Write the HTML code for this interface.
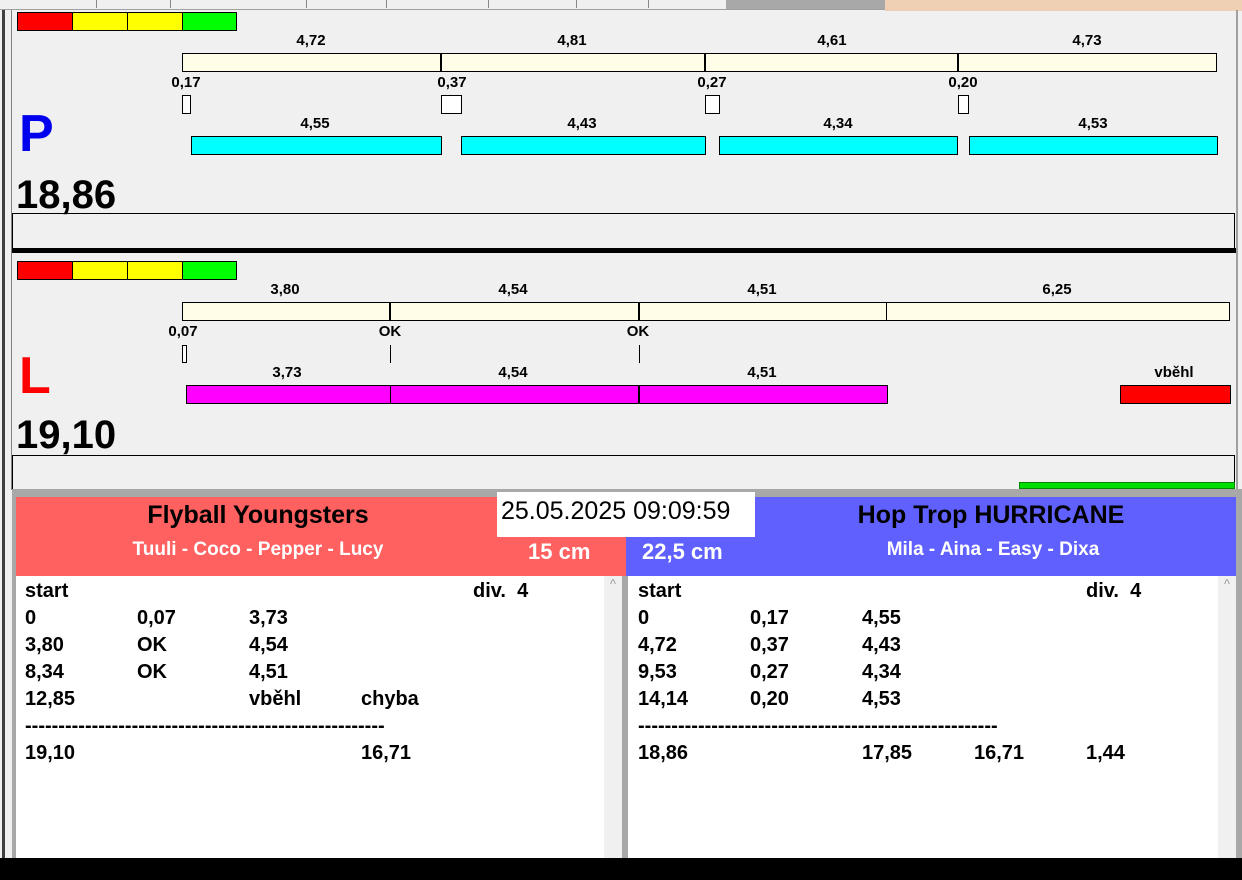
<!DOCTYPE html>
<html><head><meta charset="utf-8"><style>
*{margin:0;padding:0;box-sizing:border-box}
body{width:1242px;height:880px;position:relative;background:#f0f0f0;overflow:hidden;font-family:"Liberation Sans",Arial,sans-serif;font-weight:bold;color:#000}
div{position:absolute}
.c{transform:translateX(-50%);white-space:nowrap;font-size:15px;line-height:17px}
.bx{border:1px solid #000}
.t{font-size:20px;line-height:24px;white-space:nowrap}
.d{font-size:20px;line-height:24px;white-space:nowrap;width:360px;overflow:hidden}
</style></head><body>
<!-- tab strip -->
<div style="left:0;top:0;width:885px;height:10px;background:#f0f0f0;border-bottom:1px solid #a0a0a0"></div>
<div style="left:96px;top:0;width:1px;height:8px;background:#888"></div>
<div style="left:170px;top:0;width:1px;height:8px;background:#888"></div>
<div style="left:306px;top:0;width:1px;height:8px;background:#888"></div>
<div style="left:386px;top:0;width:1px;height:8px;background:#888"></div>
<div style="left:488px;top:0;width:1px;height:8px;background:#888"></div>
<div style="left:576px;top:0;width:1px;height:8px;background:#888"></div>
<div style="left:648px;top:0;width:1px;height:8px;background:#888"></div>
<div style="left:726px;top:0;width:159px;height:9px;background:#a8a8a8"></div>
<div style="left:885px;top:0;width:357px;height:11px;background:#f0d0b4"></div>
<!-- left frame -->
<div style="left:2px;top:10px;width:3px;height:850px;background:#404040"></div>
<div style="left:11px;top:10px;width:1px;height:480px;background:#808080"></div>
<div style="left:1236px;top:10px;width:2px;height:480px;background:#a0a0a0"></div>

<!-- panel P -->
<div class="bx" style="left:17px;top:12px;width:56px;height:19px;background:#f00"></div>
<div class="bx" style="left:72px;top:12px;width:56px;height:19px;background:#ff0"></div>
<div class="bx" style="left:127px;top:12px;width:56px;height:19px;background:#ff0"></div>
<div class="bx" style="left:182px;top:12px;width:55px;height:19px;background:#0f0"></div>

<div class="c" style="left:311px;top:32px">4,72</div>
<div class="c" style="left:572px;top:32px">4,81</div>
<div class="c" style="left:832px;top:32px">4,61</div>
<div class="c" style="left:1087px;top:32px">4,73</div>
<div class="bx" style="left:182px;top:53px;width:1035px;height:19px;background:#fffde8"></div>
<div style="left:440px;top:53px;width:2px;height:19px;background:#000"></div>
<div style="left:704px;top:53px;width:2px;height:19px;background:#000"></div>
<div style="left:957px;top:53px;width:2px;height:19px;background:#000"></div>
<div class="c" style="left:186px;top:74px">0,17</div>
<div class="c" style="left:452px;top:74px">0,37</div>
<div class="c" style="left:712px;top:74px">0,27</div>
<div class="c" style="left:963px;top:74px">0,20</div>
<div class="bx" style="left:182px;top:95px;width:9px;height:19px;background:#fff"></div>
<div class="bx" style="left:441px;top:95px;width:21px;height:19px;background:#fff"></div>
<div class="bx" style="left:705px;top:95px;width:15px;height:19px;background:#fff"></div>
<div class="bx" style="left:958px;top:95px;width:11px;height:19px;background:#fff"></div>
<div style="left:19px;top:104px;font-size:52px;line-height:60px;color:#0000ee">P</div>
<div class="c" style="left:315px;top:115px">4,55</div>
<div class="c" style="left:582px;top:115px">4,43</div>
<div class="c" style="left:838px;top:115px">4,34</div>
<div class="c" style="left:1093px;top:115px">4,53</div>
<div class="bx" style="left:191px;top:136px;width:251px;height:19px;background:#0ff"></div>
<div class="bx" style="left:461px;top:136px;width:245px;height:19px;background:#0ff"></div>
<div class="bx" style="left:719px;top:136px;width:239px;height:19px;background:#0ff"></div>
<div class="bx" style="left:969px;top:136px;width:249px;height:19px;background:#0ff"></div>
<div style="left:16px;top:172px;font-size:40px;line-height:46px">18,86</div>
<div class="bx" style="left:12px;top:213px;width:1223px;height:36px"></div>
<div style="left:12px;top:248px;width:1224px;height:5px;background:#000"></div>

<!-- panel L -->
<div class="bx" style="left:17px;top:261px;width:56px;height:19px;background:#f00"></div>
<div class="bx" style="left:72px;top:261px;width:56px;height:19px;background:#ff0"></div>
<div class="bx" style="left:127px;top:261px;width:56px;height:19px;background:#ff0"></div>
<div class="bx" style="left:182px;top:261px;width:55px;height:19px;background:#0f0"></div>
<div class="c" style="left:285px;top:281px">3,80</div>
<div class="c" style="left:513px;top:281px">4,54</div>
<div class="c" style="left:762px;top:281px">4,51</div>
<div class="c" style="left:1057px;top:281px">6,25</div>
<div class="bx" style="left:182px;top:302px;width:1048px;height:19px;background:#fffde8"></div>
<div style="left:389px;top:302px;width:2px;height:19px;background:#000"></div>
<div style="left:638px;top:302px;width:2px;height:19px;background:#000"></div>
<div style="left:886px;top:302px;width:1px;height:19px;background:#000"></div>
<div class="c" style="left:183px;top:323px">0,07</div>
<div class="c" style="left:390px;top:323px">OK</div>
<div class="c" style="left:638px;top:323px">OK</div>
<div class="bx" style="left:182px;top:345px;width:5px;height:18px;background:#fff"></div>
<div style="left:390px;top:345px;width:1px;height:18px;background:#000"></div>
<div style="left:639px;top:345px;width:1px;height:18px;background:#000"></div>
<div style="left:19px;top:348px;font-size:52px;line-height:56px;color:#f00">L</div>
<div class="c" style="left:287px;top:364px">3,73</div>
<div class="c" style="left:513px;top:364px">4,54</div>
<div class="c" style="left:762px;top:364px">4,51</div>
<div class="c" style="left:1174px;top:364px">vběhl</div>
<div class="bx" style="left:186px;top:385px;width:702px;height:19px;background:#f0f"></div>
<div style="left:390px;top:385px;width:1px;height:19px;background:#000"></div>
<div style="left:638px;top:385px;width:2px;height:19px;background:#000"></div>
<div class="bx" style="left:1120px;top:385px;width:111px;height:19px;background:#f00"></div>
<div style="left:16px;top:412px;font-size:40px;line-height:46px">19,10</div>
<div class="bx" style="left:12px;top:455px;width:1223px;height:35px"></div>
<div style="left:1019px;top:482px;width:216px;height:7px;background:#0d0;border:1px solid #080"></div>

<!-- lower area -->
<div style="left:12px;top:489px;width:1230px;height:370px;background:#a8a8a8"></div>
<div style="left:16px;top:497px;width:610px;height:79px;background:#ff6060"></div>
<div style="left:626px;top:497px;width:610px;height:79px;background:#6060ff"></div>
<div style="left:497px;top:492px;width:258px;height:45px;background:#fff"></div>
<div style="left:501px;top:496px;font-size:25px;line-height:30px;font-weight:normal;white-space:nowrap">25.05.2025 09:09:59</div>
<div class="c" style="left:258px;top:500px;font-size:25px;line-height:30px">Flyball Youngsters</div>
<div class="c" style="left:258px;top:539px;font-size:19px;line-height:22px;color:#fff">Tuuli - Coco - Pepper - Lucy</div>
<div style="left:528px;top:539px;font-size:22px;line-height:26px;color:#fff;white-space:nowrap">15 cm</div>
<div style="left:642px;top:539px;font-size:22px;line-height:26px;color:#fff;white-space:nowrap">22,5 cm</div>
<div class="c" style="left:991px;top:500px;font-size:25px;line-height:30px">Hop Trop HURRICANE</div>
<div class="c" style="left:993px;top:539px;font-size:19px;line-height:22px;color:#fff">Mila - Aina - Easy - Dixa</div>

<div style="left:16px;top:576px;width:588px;height:283px;background:#fff"></div>
<div style="left:604px;top:576px;width:18px;height:283px;background:#f0f0f0;color:#aaa;font-size:11px;text-align:center;line-height:16px">^</div>
<div style="left:628px;top:576px;width:590px;height:283px;background:#fff"></div>
<div style="left:1218px;top:576px;width:18px;height:283px;background:#f0f0f0;color:#aaa;font-size:11px;text-align:center;line-height:16px">^</div>

<!-- left list -->
<div class="t" style="left:25px;top:579px">start</div><div class="t" style="left:473px;top:579px">div.&nbsp; 4</div>
<div class="t" style="left:25px;top:606px">0</div><div class="t" style="left:137px;top:606px">0,07</div><div class="t" style="left:249px;top:606px">3,73</div>
<div class="t" style="left:25px;top:633px">3,80</div><div class="t" style="left:137px;top:633px">OK</div><div class="t" style="left:249px;top:633px">4,54</div>
<div class="t" style="left:25px;top:660px">8,34</div><div class="t" style="left:137px;top:660px">OK</div><div class="t" style="left:249px;top:660px">4,51</div>
<div class="t" style="left:25px;top:687px">12,85</div><div class="t" style="left:249px;top:687px">vběhl</div><div class="t" style="left:361px;top:687px">chyba</div>
<div class="d" style="left:25px;top:714px">------------------------------------------------------------------</div>
<div class="t" style="left:25px;top:741px">19,10</div><div class="t" style="left:361px;top:741px">16,71</div>
<!-- right list -->
<div class="t" style="left:638px;top:579px">start</div><div class="t" style="left:1086px;top:579px">div.&nbsp; 4</div>
<div class="t" style="left:638px;top:606px">0</div><div class="t" style="left:750px;top:606px">0,17</div><div class="t" style="left:862px;top:606px">4,55</div>
<div class="t" style="left:638px;top:633px">4,72</div><div class="t" style="left:750px;top:633px">0,37</div><div class="t" style="left:862px;top:633px">4,43</div>
<div class="t" style="left:638px;top:660px">9,53</div><div class="t" style="left:750px;top:660px">0,27</div><div class="t" style="left:862px;top:660px">4,34</div>
<div class="t" style="left:638px;top:687px">14,14</div><div class="t" style="left:750px;top:687px">0,20</div><div class="t" style="left:862px;top:687px">4,53</div>
<div class="d" style="left:638px;top:714px">------------------------------------------------------------------</div>
<div class="t" style="left:638px;top:741px">18,86</div><div class="t" style="left:862px;top:741px">17,85</div><div class="t" style="left:974px;top:741px">16,71</div><div class="t" style="left:1086px;top:741px">1,44</div>

<div style="left:0;top:858px;width:1242px;height:22px;background:#000"></div>
</body></html>
